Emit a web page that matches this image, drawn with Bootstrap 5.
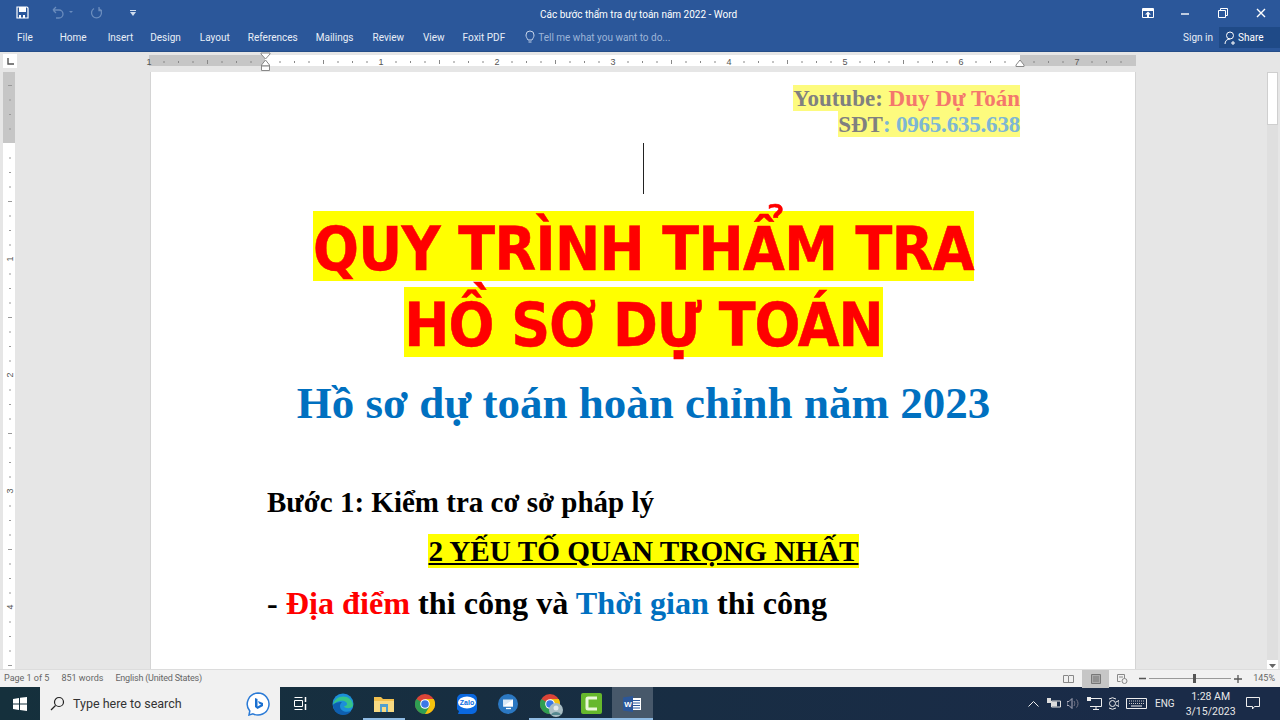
<!DOCTYPE html>
<html lang="en">
<head>
<meta charset="UTF-8">
<title>Các bước thẩm tra dự toán năm 2022 - Word</title>
<link rel="stylesheet" href="https://cdn.jsdelivr.net/npm/bootstrap@5.3.0/dist/css/bootstrap.min.css">
<style>
  html, body { height: 720px; overflow: hidden; }
  body { font-family: Roboto, sans-serif; background: #e6e6e6; }
  .word-app { width: 1280px; height: 720px; }

  .title-bar { height: 25px; background: #2b579a; color: #fff; font-size: 10px; position: relative; }
  .title-text { position: absolute; left: 540px; top: 7px; white-space: nowrap; }
  .win-btns svg { display: block; }

  .tab-bar { height: 27px; background: #2b579a; color: #e8eef7; font-size: 10px; border-bottom: 1px solid #254d88; }
  .tab-item { white-space: nowrap; }
  .tell-me { color: #9db5d8; }
  .share-box { width: 61px; height: 21px; background: #1f4a87; color: #fff; }

  .ruler-row { height: 20px; background: #e6e6e6; }
  .ruler-corner { width: 14px; height: 14px; background: #fff; margin: 2px 0 0 3px; }
  .ruler-row svg { display: block; position: absolute; left: 0; top: 0; }
  .ruler-text { font-family: "Liberation Sans", sans-serif; font-size: 9px; fill: #555; }

  .doc-area { height: 597px; background: #e6e6e6; overflow: hidden; }
  .v-ruler { width: 150px; flex: none; }
  .v-ruler svg { display: block; }
  .doc-page { width: 986px; height: 597px; flex: none; background: #fff; padding: 13px 115px 0 116px; border-left: 1px solid #d4d4d4; border-right: 1px solid #d4d4d4; }
  .contact-line { font-family: "Liberation Serif", serif; font-weight: 700; font-size: 23px; height: 26px; color: #808080; }
  .contact-line span { display: block; width: fit-content; margin-left: auto; height: 26px; line-height: 28px; background: #fdfb7e; }
  .tone-red { color: #f4776d; }
  .tone-blue { color: #7db6d4; letter-spacing: -.2px; }
  .caret-wrap { height: 74px; padding-top: 6px; }
  .text-caret { width: 1px; height: 51px; background: #222; margin-left: 376px; }
  .big-title { font-family: "DejaVu Sans", sans-serif; font-stretch: condensed; font-weight: 700; font-size: 60px; color: #f00; white-space: nowrap; height: 76px; letter-spacing: -.6px; -webkit-text-stroke: .5px #f00; }
  .big-title span { display: block; width: fit-content; margin: 0 auto; background: #ff0; height: 70px; line-height: 76px; }
  .title-second { letter-spacing: -1px; }
  .sub-title { font-family: "Liberation Serif", serif; font-weight: 700; font-size: 45px; color: #0070c0; text-align: center; white-space: nowrap; line-height: 54px; height: 54px; margin-top: 13px; }
  .body-line { font-family: "Liberation Serif", serif; font-weight: 700; font-size: 29px; color: #000; white-space: nowrap; line-height: 34px; height: 34px; }
  .step-line { margin-top: 55px; }
  .key-line { text-align: center; margin-top: 15px; font-size: 29.2px; }
  .key-line span { background: #ff0; display: inline-block; text-decoration: underline; }
  .place-line { margin-top: 18px; font-size: 32.2px; }
  .word-red { color: #f00; }
  .word-blue { color: #0070c0; }

  .v-scroll { width: 144px; flex: none; }
  .scroll-track { width: 11px; height: 617px; background: #dfdfdf; margin-left: 131px; margin-top: -18px; }
  .scroll-arrow { height: 11px; background: #fff; color: #666; }
  .scroll-thumb { height: 53px; margin-top: 7px; background: #fff; border: 1px solid #cfcfcf; }

  .status-bar { height: 18px; background: #f1f1f1; color: #666; font-size: 9px; border-top: 1px solid #dcdcdc; }
  .lang-text { letter-spacing: -.2px; }
  .view-btn { width: 27px; height: 18px; }
  .view-on { background: #c6c6c6; }
  .zoom-track { width: 82px; height: 1px; background: #999; position: relative; }
  .zoom-thumb { position: absolute; left: 44px; top: -4px; width: 3px; height: 9px; background: #555; }

  .task-bar { height: 33px; background: linear-gradient(90deg, #15303c, #1a2b48 90%); color: #eee; }
  .start-box { width: 40px; }
  .search-box { width: 240px; background: #f1f1f1; color: #333; font-size: 12.5px; }
  .task-cell { width: 41.4px; height: 33px; position: relative; }
  .task-open { box-shadow: inset 0 -2px 0 #8fbbe3; }
  .task-word { background: #47586a; box-shadow: inset 0 -2px 0 #8fbbe3; }
  .tray-text { font-size: 10.5px; text-align: center; line-height: 15px; }
  .avatar-dot { position: absolute; right: 7px; bottom: 3px; }
</style>
</head>
<body>
<div class="word-app d-flex flex-column">

  <div class="title-bar d-flex align-items-center">
    <svg class="ms-3" width="13" height="13" viewBox="0 0 13 13"><path d="M1 1h10l1 1v10H1z" fill="none" stroke="#fff" stroke-width="1.2"/><path d="M3 1h7v5H3z" fill="#fff"/><path d="M3 9h2v3H3zM7 9h2v3H7z" fill="#fff"/></svg>
    <svg style="margin-left:22px" width="24" height="13" viewBox="0 0 24 13"><path d="M2 4h6a4 4 0 0 1 0 8H5M2 4l3-3M2 4l3 3" fill="none" stroke="#6a8cbd" stroke-width="1.3"/><path d="M18 5l2 2 2-2z" fill="#6a8cbd"/></svg>
    <svg style="margin-left:15px" width="13" height="13" viewBox="0 0 13 13"><path d="M9 2.500a5 5 0 1 1-5 0M9 1v3.500h3" fill="none" stroke="#6a8cbd" stroke-width="1.3"/></svg>
    <svg style="margin-left:26px" width="8" height="8" viewBox="0 0 8 8"><path d="M1 1h6v1H1zM1 3h6L4 7z" fill="#cfdcee"/></svg>
    <div class="title-text">Các bước thẩm tra dự toán năm 2022 - Word</div>
    <div class="win-btns ms-auto d-flex align-items-center" style="margin-right:14px">
      <svg width="12" height="10" viewBox="0 0 12 10"><path d="M.5.500h11v9H.5z" fill="none" stroke="#fff"/><path d="M1 1h10v2H1zM6 3.500l3 3H7v3H5v-3H3z" fill="#fff"/></svg>
      <svg style="margin-left:26px" width="10" height="10" viewBox="0 0 10 10"><path d="M1 6h8" stroke="#fff" stroke-width="1.400"/></svg>
      <svg style="margin-left:28px" width="10" height="10" viewBox="0 0 10 10"><path d="M.5 2.500h7v7h-7zM2.500 2.500v-2h7v7h-2" fill="none" stroke="#fff"/></svg>
      <svg style="margin-left:28px" width="10" height="10" viewBox="0 0 10 10"><path d="M1 1l8 8M9 1l-8 8" stroke="#fff" stroke-width="1.400"/></svg>
    </div>
  </div>

  <div class="tab-bar d-flex align-items-start" style="padding-top:5px">
    <span class="tab-item" style="margin-left:17px">File</span>
    <span class="tab-item" style="margin-left:27px">Home</span>
    <span class="tab-item" style="margin-left:21px">Insert</span>
    <span class="tab-item" style="margin-left:17px">Design</span>
    <span class="tab-item" style="margin-left:19px">Layout</span>
    <span class="tab-item" style="margin-left:18px">References</span>
    <span class="tab-item" style="margin-left:18px">Mailings</span>
    <span class="tab-item" style="margin-left:19px">Review</span>
    <span class="tab-item" style="margin-left:19px">View</span>
    <span class="tab-item" style="margin-left:18px">Foxit PDF</span>
    <svg style="margin:0 0 0 20px" width="10" height="14" viewBox="0 0 10 14"><path d="M3 10C2 8 1 7 1 5a4 4 0 0 1 8 0c0 2-1 3-2 5zM3.500 12h3" fill="none" stroke="#c6d4ea"/></svg>
    <span class="tab-item tell-me" style="margin-left:3px">Tell me what you want to do...</span>
    <span class="tab-item ms-auto">Sign in</span>
    <div class="share-box d-flex align-items-center" style="margin:-3px 0 0 6px;padding-left:5px">
      <svg width="13" height="14" viewBox="0 0 13 14"><circle cx="6" cy="4.500" r="3.500" fill="none" stroke="#fff"/><path d="M1 13c0-3 2-5 5-5M9 10v4M7 12h4" fill="none" stroke="#fff"/></svg>
      <span style="margin-left:1px">Share</span>
    </div>
  </div>

  <div class="ruler-row position-relative">
    <div class="ruler-corner d-flex align-items-center justify-content-center">
      <svg style="position:static" width="7" height="7" viewBox="0 0 7 7"><path d="M1 0v6h6" fill="none" stroke="#555" stroke-width="1.400"/></svg>
    </div>
    <svg id="hRuler" width="1260" height="20" viewBox="0 0 1260 20"></svg>
  </div>

  <div class="doc-area d-flex">
    <div class="v-ruler">
      <svg id="vRuler" width="20" height="597" viewBox="0 0 20 597"></svg>
    </div>
    <div class="doc-page">
      <div class="contact-line"><span>Youtube: <b class="tone-red">Duy Dự Toán</b></span></div>
      <div class="contact-line"><span>SĐT<b class="tone-blue">: 0965.635.638</b></span></div>
      <div class="caret-wrap"><div class="text-caret"></div></div>
      <div class="big-title"><span>QUY TRÌNH THẨM TRA</span></div>
      <div class="big-title title-second"><span>HỒ SƠ DỰ TOÁN</span></div>
      <div class="sub-title">Hồ sơ dự toán hoàn chỉnh năm 2023</div>
      <div class="body-line step-line">Bước 1: Kiểm tra cơ sở pháp lý</div>
      <div class="body-line key-line"><span>2 YẾU TỐ QUAN TRỌNG NHẤT</span></div>
      <div class="body-line place-line">- <span class="word-red">Địa điểm</span> thi công và <span class="word-blue">Thời gian</span> thi công</div>
    </div>
    <div class="v-scroll">
      <div class="scroll-track d-flex flex-column">
        <div class="scroll-arrow d-flex align-items-center justify-content-center"><svg width="7" height="4" viewBox="0 0 7 4"><path d="M0 4l3.500-4L7 4z" fill="#666"/></svg></div>
        <div class="scroll-thumb"></div>
        <div class="scroll-arrow d-flex align-items-center justify-content-center mt-auto"><svg width="7" height="4" viewBox="0 0 7 4"><path d="M0 0l3.500 4L7 0z" fill="#666"/></svg></div>
      </div>
    </div>
  </div>

  <div class="status-bar d-flex align-items-center position-relative">
    <span style="margin-left:4px">Page 1 of 5</span>
    <span style="margin-left:12px">851 words</span>
    <span class="lang-text" style="margin-left:12px">English (United States)</span>
    <div class="ms-auto d-flex align-items-center">
      <div class="view-btn d-flex align-items-center justify-content-center"><svg width="11" height="10" viewBox="0 0 11 10"><path d="M.5 1.500h4.500l.5.5.5-.5h4.500v7H6l-.5.5-.5-.5H.5zM5.500 2v7" fill="none" stroke="#888"/></svg></div>
      <div class="view-btn view-on d-flex align-items-center justify-content-center"><svg width="10" height="10" viewBox="0 0 10 10"><path d="M.5.500h9v9h-9z" fill="#aaa" stroke="#777"/><path d="M2 3h6M2 5h6M2 7h6" stroke="#777"/></svg></div>
      <div class="view-btn d-flex align-items-center justify-content-center"><svg width="11" height="10" viewBox="0 0 11 10"><path d="M.5.500h7v4M.5.500v7h3M2 3h4" fill="none" stroke="#888"/><circle cx="7.500" cy="7" r="2.500" fill="none" stroke="#888"/></svg></div>
      <svg style="margin-left:3px" width="7" height="3" viewBox="0 0 7 3"><path d="M0 1.500h7" stroke="#555" stroke-width="1.500"/></svg>
      <div class="zoom-track" style="margin-left:3px"><div class="zoom-thumb"></div></div>
      <svg style="margin-left:3px" width="8" height="8" viewBox="0 0 8 8"><path d="M0 4h8M4 0v8" stroke="#555" stroke-width="1.300"/></svg>
      <span style="margin:0 5px 0 11px">145%</span>
    </div>
  </div>

  <div class="task-bar d-flex">
    <div class="start-box d-flex align-items-center justify-content-center">
      <svg width="14" height="14" viewBox="0 0 14 14"><path d="M0 2l6-1v5.500H0zM7 .800L14 0v6.500H7zM0 7.500h6V13l-6-1zM7 7.500h7V14l-7-1z" fill="#fff"/></svg>
    </div>
    <div class="search-box d-flex align-items-center">
      <svg style="margin-left:10px" width="15" height="15" viewBox="0 0 15 15"><circle cx="9" cy="6" r="4.500" fill="none" stroke="#222" stroke-width="1.200"/><path d="M5.500 9.500L1 14" stroke="#222" stroke-width="1.300"/></svg>
      <span style="margin-left:8px;padding-top:1px">Type here to search</span>
      <svg class="ms-auto" style="margin-right:10px" width="24" height="24" viewBox="0 0 24 24"><path d="M12 1a11 11 0 1 1-5 20.800L3 23l.8-4A11 11 0 0 1 12 1z" fill="#fff" stroke="#2a7ad6" stroke-width="1.500"/><path d="M9 6l2.500 1v7.500l3.500-2-2-1-1-2.500 5 2v3l-5.500 3L9 15z" fill="#1a6fd0"/></svg>
    </div>
    <div class="task-cell d-flex align-items-center justify-content-center" style="width:42px">
      <svg width="14" height="13" viewBox="0 0 14 13"><path d="M.5.500h8M.5 12.500h8M.5 3.500h8v6h-8z" fill="none" stroke="#fff"/><path d="M11.500 0v5M11.500 7v6" stroke="#fff" stroke-width="1.500"/></svg>
    </div>
    <div class="task-cell d-flex align-items-center justify-content-center">
      <svg width="22" height="22" viewBox="0 0 22 22"><circle cx="11" cy="11" r="10.500" fill="#1c8fd8"/><path d="M1 12C2 5 9 2 15 4c4 2 6 5 6 9-2 3-8 3-9 0 3 0 4-2 2-4-4-3-11 0-13 3z" fill="#35c48a"/><path d="M1 12c0 6 5 10 10 10 3 0 6-1 8-4-5 2-11 0-11-5 0-2 1-3 2-4-4 0-8 1-9 3z" fill="#0e5fb0"/></svg>
    </div>
    <div class="task-cell task-open d-flex align-items-center justify-content-center">
      <svg width="20" height="18" viewBox="0 0 20 18"><path d="M0 2h7l2 2h11v13H0z" fill="#f2c04e"/><path d="M0 6h20v11H0z" fill="#f8da82"/><path d="M6 9h8v8h-2v-5H8v5H6z" fill="#4f9fcf"/></svg>
    </div>
    <div class="task-cell d-flex align-items-center justify-content-center">
      <svg width="20" height="20" viewBox="0 0 20 20"><circle cx="10" cy="10" r="10" fill="#db4437"/><path d="M10 20a10 10 0 0 0 8.700-15H10z" fill="#f4c20d"/><path d="M1.300 5A10 10 0 0 0 10 20l4.500-7.500z" fill="#2f9e52"/><circle cx="10" cy="10" r="4.800" fill="#fff"/><circle cx="10" cy="10" r="3.800" fill="#3b78e7"/></svg>
    </div>
    <div class="task-cell d-flex align-items-center justify-content-center">
      <svg width="20" height="20" viewBox="0 0 20 20"><path d="M5 0h10a5 5 0 0 1 5 5v10a5 5 0 0 1-5 5H1l1-3a5 5 0 0 1-2-2V5a5 5 0 0 1 5-5z" fill="#0a68e0"/><ellipse cx="10" cy="8.500" rx="9" ry="6" fill="#fff"/><text x="10" y="11" text-anchor="middle" font-size="7" font-weight="700" fill="#0a68e0" font-family="Liberation Sans">Zalo</text></svg>
    </div>
    <div class="task-cell d-flex align-items-center justify-content-center">
      <svg width="20" height="20" viewBox="0 0 20 20"><circle cx="10" cy="10" r="10" fill="#2b78c2"/><path d="M5 5.500h10v7H5z" fill="#d9e8f6"/><path d="M5 12.500L15 5.500v7z" fill="#fff"/><path d="M8 14.500h5" stroke="#fff" stroke-width="1.300"/></svg>
    </div>
    <div class="task-cell task-open d-flex align-items-center justify-content-center">
      <svg width="20" height="20" viewBox="0 0 20 20"><circle cx="10" cy="10" r="10" fill="#db4437"/><path d="M10 20a10 10 0 0 0 8.700-15H10z" fill="#f4c20d"/><path d="M1.300 5A10 10 0 0 0 10 20l4.500-7.500z" fill="#2f9e52"/><circle cx="10" cy="10" r="4.800" fill="#fff"/><circle cx="10" cy="10" r="3.800" fill="#3b78e7"/></svg>
      <svg class="avatar-dot" width="14" height="14" viewBox="0 0 14 14"><circle cx="7" cy="7" r="7" fill="#a9bdc4"/><circle cx="7" cy="5" r="2.500" fill="#e4eaec"/><path d="M2 12c1-4 9-4 10 0z" fill="#55878f"/></svg>
    </div>
    <div class="task-cell task-open d-flex align-items-center justify-content-center">
      <svg width="21" height="21" viewBox="0 0 21 21"><path d="M2 0h17a2 2 0 0 1 2 2v17a2 2 0 0 1-2 2H2a2 2 0 0 1-2-2V2a2 2 0 0 1 2-2z" fill="#66b82c"/><path d="M16 5H7a1 1 0 0 0-1 1v9a1 1 0 0 0 1 1h9" fill="none" stroke="#e9f7d8" stroke-width="3"/></svg>
    </div>
    <div class="task-cell task-word d-flex align-items-center justify-content-center">
      <svg width="18" height="16" viewBox="0 0 18 16"><path d="M9 2h9v12H9z" fill="#fff"/><path d="M10 4.500h7M10 7h7M10 9.500h7M10 12h7" stroke="#2b579a"/><path d="M0 1.500L10 0v16L0 14.500z" fill="#2b579a"/><text x="5" y="11" text-anchor="middle" font-size="8" font-weight="700" fill="#fff" font-family="Liberation Sans">W</text></svg>
    </div>
    <div class="ms-auto d-flex align-items-center" style="width:255px;color:#e8e8e8">
      <svg style="margin-left:3px" width="11" height="7" viewBox="0 0 11 7"><path d="M.5 6.500l5-5 5 5" fill="none" stroke="#eee"/></svg>
      <svg style="margin-left:8px" width="14" height="11" viewBox="0 0 14 11"><path d="M4.500 3h9v6h-9z" fill="none" stroke="#ddd"/><path d="M5 3.500h5v5H5zM0 0h4v5H0z" fill="#ddd"/></svg>
      <svg style="margin-left:6px" width="13" height="11" viewBox="0 0 13 11"><path d="M0 3.500h2l3-3v10l-3-3H0z" fill="none" stroke="#aab"/><path d="M7 3c1 1.500 1 3.500 0 5M9.500 1.500c2 2.500 2 5.500 0 8" fill="none" stroke="#778"/></svg>
      <svg style="margin-left:7px" width="15" height="13" viewBox="0 0 15 13"><path d="M3 1.500h11.500v8H3M6 12.500h6M9 9.500v3" fill="none" stroke="#eee"/><path d="M0 0h4v4H0z" fill="#eee"/></svg>
      <svg style="margin-left:5px" width="12" height="13" viewBox="0 0 12 13"><circle cx="5.500" cy="6.500" r="3" fill="none" stroke="#eee"/><path d="M2 2A6 6 0 0 1 9 2M2 11a6 6 0 0 0 7 0M9 5l3-1.500v6L9 8" fill="none" stroke="#eee"/></svg>
      <svg style="margin-left:7px" width="21" height="11" viewBox="0 0 21 11"><path d="M.5.500h20v10H.5z" fill="none" stroke="#eee"/><path d="M3 3h15M3 5.500h15" stroke="#ccc" stroke-dasharray="1 1"/><path d="M5 8h11" stroke="#eee"/></svg>
      <span class="tray-text" style="margin-left:8px;font-size:10px">ENG</span>
      <div class="tray-text" style="margin-left:11px">1:28 AM<br>3/15/2023</div>
      <svg style="margin-left:10px" width="14" height="13" viewBox="0 0 14 13"><path d="M.5.500h13v9H8.500L6.500 12V9.500h-6z" fill="none" stroke="#eee"/></svg>
    </div>
  </div>
</div>

<script>
  // ruler ticks are generated, an inch is 116px on the page
  function rulerMarks(zeroPos, from, to, horizontal) {
    let out = "";
    for (let i = from; i <= to; i += 1 / 8) {
      const p = zeroPos + i * 116;
      if (Number.isInteger(i)) {
        const label = Math.abs(i);
        if (label === 0) continue;
        out += horizontal
          ? `<text class="ruler-text" x="${p}" y="13" text-anchor="middle">${label}</text>`
          : `<text class="ruler-text" x="0" y="0" text-anchor="middle" transform="translate(9.500 ${p}) rotate(-90) translate(0 3)">${label}</text>`;
      } else {
        const len = Number.isInteger(i * 2) ? 4 : 2;
        out += horizontal
          ? `<rect x="${p}" y="${10 - len / 2}" width="1" height="${len}" fill="#888"/>`
          : `<rect x="${10 - len / 2}" y="${p}" width="${len}" height="1" fill="#999"/>`;
      }
    }
    return out;
  }

  document.getElementById("hRuler").innerHTML =
    `<rect x="149" y="3" width="986" height="11" fill="#fff"/>
     <rect x="149" y="3" width="116" height="11" fill="#c6c6c6"/>
     <rect x="1020" y="3" width="116" height="11" fill="#c6c6c6"/>` +
    rulerMarks(265, -1, 7.4, true) +
    `<path d="M261 1h9v1l-4.500 5-4.500-5z" fill="#fff" stroke="#888"/>
     <path d="M265.500 8l4 5v1h-8v-1z" fill="#fff" stroke="#888"/>
     <path d="M261.500 14h8v4.500h-8z" fill="#fff" stroke="#888"/>
     <path d="M1020 8l4 5v1.500h-8V13z" fill="#fff" stroke="#888"/>`;

  document.getElementById("vRuler").innerHTML =
    `<rect x="3" y="0" width="12" height="597" fill="#fff"/>
     <rect x="3" y="0" width="12" height="71" fill="#c6c6c6"/>` +
    rulerMarks(71, -0.5, 4.5, false);
</script>
</body>
</html>
